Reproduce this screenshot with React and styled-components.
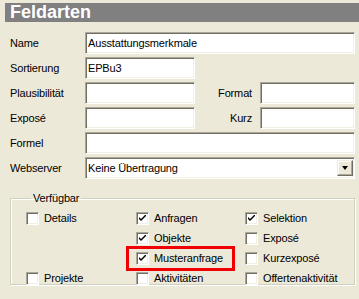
import React from "react";
import styled, { createGlobalStyle } from "styled-components";

const Global = createGlobalStyle`
  html, body { margin: 0; padding: 0; background: #ECE9D8; }
  body { font-family: "Liberation Sans", Arial, sans-serif; font-size: 11px; letter-spacing: -0.15px; color: #000; }
`;

const Page = styled.div`
  width: 359px;
  height: 299px;
  background: #ECE9D8;
  padding-top: 3px;
  box-sizing: border-box;
  overflow: hidden;
`;

const Header = styled.div`
  margin-left: 5px;
  height: 19px;
  background: #808080;
  color: #fff;
  font-weight: bold;
  font-size: 18px;
  letter-spacing: 0;
  line-height: 19px;
  padding-left: 5px;
`;

const Form = styled.div`
  display: flex;
  flex-direction: column;
  gap: 3px;
  padding: 10px 4px 0 10px;
`;

const Row = styled.div`
  display: flex;
  align-items: center;
  height: 22px;
`;

const Label = styled.div`
  width: ${(p) => p.$w || 75}px;
  text-align: ${(p) => (p.$right ? "right" : "left")};
  padding-right: ${(p) => (p.$right ? 8 : 0)}px;
  box-sizing: border-box;
  flex: none;
`;

const Input = styled.div`
  box-sizing: border-box;
  height: 22px;
  width: ${(p) => (p.$w ? `${p.$w}px` : "auto")};
  flex: ${(p) => (p.$w ? "none" : "1")};
  background: #fff;
  border-top: 1px solid #ACA899;
  border-left: 1px solid #ACA899;
  border-right: 1px solid #fff;
  border-bottom: 1px solid #fff;
  box-shadow: inset 1px 1px 0 #716F64, inset -1px -1px 0 #F1EFE2;
  padding: 0 2px;
  line-height: 19px;
  display: flex;
  align-items: center;
`;

const SelectText = styled.span`
  flex: 1;
`;

const DropButton = styled.div`
  width: 16px;
  height: 16px;
  box-sizing: border-box;
  background: #ECE9D8;
  border-top: 1px solid #F1EFE2;
  border-left: 1px solid #F1EFE2;
  border-right: 1px solid #716F64;
  border-bottom: 1px solid #716F64;
  box-shadow: inset -1px -1px 0 #ACA899, inset 1px 1px 0 #fff;
  display: flex;
  align-items: center;
  justify-content: center;
  margin-right: -1px;
`;

const Arrow = styled.div`
  width: 0;
  height: 0;
  border-left: 3.5px solid transparent;
  border-right: 3.5px solid transparent;
  border-top: 4px solid #000;
`;

const Group = styled.fieldset`
  margin: 13px 4px 0 10px;
  padding: 4px 0 8px 15px;
  border: 1px solid #D0D0BF;
  box-shadow: inset 1px 1px 0 #fff, 1px 1px 0 #fff;
  height: 93px;
  box-sizing: border-box;
`;

const Legend = styled.legend`
  padding: 0 2px;
  margin-left: 5px;
  line-height: 12px;
`;

const Grid = styled.div`
  display: grid;
  grid-template-columns: 110px 109px 1fr;
  grid-auto-rows: 20px;
`;

const Item = styled.div`
  position: relative;
  display: flex;
  align-items: center;
  gap: 5px;
  grid-column: ${(p) => p.$col};
  grid-row: ${(p) => p.$row};
  ${(p) =>
    p.$mark &&
    `&::after {
      content: "";
      position: absolute;
      left: -10px;
      top: -2px;
      width: 109px;
      height: 25px;
      box-sizing: border-box;
      border: 3px solid #F00000;
    }`}
`;

const Box = styled.div`
  width: 13px;
  height: 13px;
  box-sizing: border-box;
  background: #fff;
  border-top: 1px solid #ACA899;
  border-left: 1px solid #ACA899;
  border-right: 1px solid #fff;
  border-bottom: 1px solid #fff;
  box-shadow: inset 1px 1px 0 #716F64, inset -1px -1px 0 #F1EFE2;
  display: flex;
  align-items: center;
  justify-content: center;
  flex: none;
`;

const Check = () => (
  <svg width="7" height="7" viewBox="0 0 7 7">
    <path d="M0 2 L0 4 L2 6 L7 1 L7 -1 L2 4 Z" fill="#000" />
  </svg>
);

const CheckItem = ({ col, row, checked, mark, children }) => (
  <Item $col={col} $row={row} $mark={mark}>
    <Box>{checked && <Check />}</Box>
    <span>{children}</span>
  </Item>
);

export default function App() {
  return (
    <Page>
      <Global />
      <Header>Feldarten</Header>
      <Form>
        <Row>
          <Label>Name</Label>
          <Input>Ausstattungsmerkmale</Input>
        </Row>
        <Row>
          <Label>Sortierung</Label>
          <Input $w={110}>EPBu3</Input>
        </Row>
        <Row>
          <Label>Plausibilität</Label>
          <Input $w={110} />
          <Label $w={65} $right>Format</Label>
          <Input />
        </Row>
        <Row>
          <Label>Exposé</Label>
          <Input $w={110} />
          <Label $w={65} $right>Kurz</Label>
          <Input />
        </Row>
        <Row>
          <Label>Formel</Label>
          <Input />
        </Row>
        <Row>
          <Label>Webserver</Label>
          <Input>
            <SelectText>Keine Übertragung</SelectText>
            <DropButton>
              <Arrow />
            </DropButton>
          </Input>
        </Row>
      </Form>
      <Group>
        <Legend>Verfügbar</Legend>
        <Grid>
          <CheckItem col={1} row={1}>Details</CheckItem>
          <CheckItem col={1} row={4}>Projekte</CheckItem>
          <CheckItem col={2} row={1} checked>Anfragen</CheckItem>
          <CheckItem col={2} row={2} checked>Objekte</CheckItem>
          <CheckItem col={2} row={3} checked mark>Musteranfrage</CheckItem>
          <CheckItem col={2} row={4}>Aktivitäten</CheckItem>
          <CheckItem col={3} row={1} checked>Selektion</CheckItem>
          <CheckItem col={3} row={2}>Exposé</CheckItem>
          <CheckItem col={3} row={3}>Kurzexposé</CheckItem>
          <CheckItem col={3} row={4}>Offertenaktivität</CheckItem>
        </Grid>
      </Group>
    </Page>
  );
}
